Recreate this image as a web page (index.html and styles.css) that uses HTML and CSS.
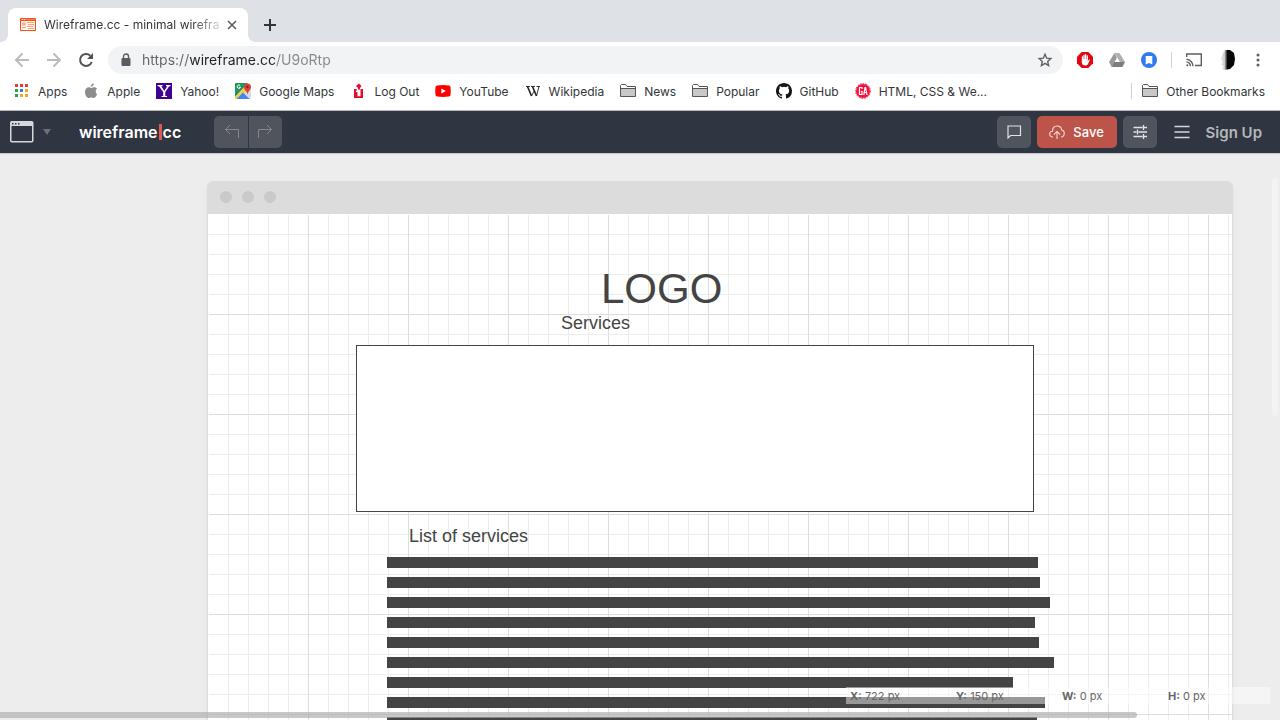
FILE: index.html
```html
<!DOCTYPE html>
<html lang="en">
<head>
<meta charset="utf-8">
<title>Wireframe.cc - minimal wireframing tool</title>
<link rel="stylesheet" href="styles.css">
</head>
<body>
<header class="browser">
  <div class="tabs">
    <div class="tab">
      <svg class="icon16" viewBox="0 0 16 16" fill="none" stroke="#fb4f14"><path d="M.5 1.500h15v12H.5z" fill="#fff4ee"/><path d="M1 3.500h14"/><path d="M1 2.500h1M3 2.500h1M5 2.500h10" opacity=".7"/><path d="M2.500 6h3v2h-3z" fill="#fbb08f" stroke="#fbb08f"/><path d="M7 5.500h7M8 7.500h6M2 10.500h4M7 9.500h6M8 11.500h6" stroke="#fba27e"/></svg>
      <span class="tab-title">Wireframe.cc - minimal wirefra</span>
      <button class="plain" aria-label="Close tab"><svg width="10" height="10" viewBox="0 0 10 10" stroke="#5a5d61" stroke-width="1.600"><path d="M1 1l8 8M9 1L1 9"/></svg></button>
    </div>
    <button class="plain new-tab" aria-label="New tab"><svg width="12" height="12" viewBox="0 0 12 12" stroke="#333639" stroke-width="2"><path d="M6 0v12M0 6h12"/></svg></button>
  </div>
  <div class="toolbar">
    <div class="nav">
      <button class="plain" aria-label="Back"><svg class="icon16" viewBox="0 0 16 16" fill="none" stroke="#babcbe" stroke-width="2"><path d="M15 8H2M8.500 1.500L2 8l6.500 6.500"/></svg></button>
      <button class="plain" aria-label="Forward"><svg class="icon16" viewBox="0 0 16 16" fill="none" stroke="#babcbe" stroke-width="2"><path d="M1 8h13M7.500 1.500L14 8l-6.500 6.500"/></svg></button>
      <button class="plain" aria-label="Reload"><svg class="icon16" viewBox="0 0 16 16" fill="none" stroke="#505357" stroke-width="2"><path d="M13.700 10A6 6 0 1 1 12.300 3.700"/><path d="M15 1v6H9z" fill="#505357" stroke="none"/></svg></button>
    </div>
    <div class="omnibox">
      <svg width="10" height="14" viewBox="0 0 10 14"><path d="M2.500 6V3.500a2.500 2.500 0 0 1 5 0V6" fill="none" stroke="#5a5d61" stroke-width="1.400"/><rect y="5" x="0.500" width="9" height="8" rx="1" fill="#5a5d61"/></svg>
      <input class="url" type="text" aria-label="Address" value="https://wireframe.cc/U9oRtp">
      <button class="plain" aria-label="Bookmark this page"><svg class="icon16" viewBox="0 0 16 16" fill="none" stroke="#5c5f63" stroke-width="1.400"><path d="M8 2.300l1.700 3.900 4.100.4-3.100 2.800.9 4.100L8 11.400l-3.600 2.100.9-4.100-3.100-2.800 4.100-.4z"/></svg></button>
    </div>
    <div class="extensions">
      <button class="plain" aria-label="Ad blocker"><svg class="icon16" viewBox="0 0 16 16"><path d="M4.700 0h6.600L16 4.700v6.600L11.300 16H4.700L0 11.300V4.700z" fill="#e10812"/><path d="M4.800 8V4.500q.7-.7 1.300 0V7h.3V3q.6-.8 1.300 0v4H8V2.500q.6-.8 1.300 0V7h.4V3.600q.6-.7 1.200 0V9l1-1.400q.8-.4 1 .3L11 12q-.8 1.500-2.500 1.500-3.700 0-3.700-3z" fill="#fff"/></svg></button>
      <button class="plain" aria-label="Drive"><svg class="icon16" viewBox="0 0 16 16"><path d="M5.500 1h5L16 10h-5z" fill="#b0b0b0"/><path d="M5.500 1L0 10l2.600 5L8 6z" fill="#999"/><path d="M2.600 15L5.200 10H16l-2.600 5z" fill="#7d7d7d"/><path d="M8 6l2.500 4h-5z" fill="#fff"/></svg></button>
      <button class="plain" aria-label="Reader"><svg class="icon16" viewBox="0 0 16 16"><circle cx="8" cy="8" r="8" fill="#2d7bf0"/><path d="M4.700 4h6.600v8.500L8 11l-3.300 1.500z" fill="#fff"/></svg></button>
      <i class="rule"></i>
      <button class="plain cast" aria-label="Cast"><svg class="icon16" viewBox="0 0 16 16" fill="none" stroke="#5c5f63" stroke-width="1.400"><path d="M.7 5V2h14.600v11.500H9"/><path d="M.5 7.200a7 7 0 0 1 6.500 7M.5 9.900a4 4 0 0 1 3.900 4.300"/><circle cx="1.300" cy="13.300" r="1" fill="#5c5f63" stroke="none"/></svg></button>
      <button class="plain profile" aria-label="Profile"><svg width="20" height="20" viewBox="0 0 20 20"><defs><linearGradient id="moon"><stop offset="0" stop-color="#fafafa"/><stop offset=".3" stop-color="#ccc"/><stop offset=".5" stop-color="#080808"/></linearGradient></defs><path d="M8 0h5l4 3 1 6-1 6-4 4-6 1-2-2 2-1-3-3 2-2-3-3 2-3 1-3z" fill="url(#moon)"/></svg></button>
      <button class="plain more" aria-label="Menu"><svg width="4" height="14" viewBox="0 0 4 14" fill="#5c5f63"><circle cx="2" cy="2" r="1.500"/><circle cx="2" cy="7" r="1.500"/><circle cx="2" cy="12" r="1.500"/></svg></button>
    </div>
  </div>
  <nav class="bookmarks">
    <a href="#"><svg class="icon16" viewBox="0 0 16 16"><path d="M1 1h3v3H1zM6 1h3v3H6zM11 1h3v3h-3z" fill="#e8393b"/><path d="M1 6h3v3H1zM1 11h3v3H1z" fill="#22a45d"/><path d="M6 6h3v3H6z" fill="#2d7fe8"/><path d="M11 6h3v3h-3zM6 11h3v3H6zM11 11h3v3h-3z" fill="#f0a51e"/></svg>Apps</a>
    <a href="#"><svg class="icon16" viewBox="0 0 16 16" fill="#8d8d8d"><path d="M10.800.3c.2 2-1.300 3.400-3 3.400C7.700 2 9.200.5 10.800.3zM12.700 8.300c0-1.500 1.200-2.300 1.300-2.500-1.500-2-3.600-1.500-4.300-1.200-1.200.5-1.500.4-2.600-.1C4.700 3.600 2 5.200 2 8.900 2 12 4 15 5.800 15c1 0 1.300-.6 2.500-.6s1.500.6 2.500.6c1.500 0 2.900-2.600 3.300-3.900-.9-.4-1.400-1.500-1.400-2.800z"/></svg>Apple</a>
    <a href="#"><svg class="icon16" viewBox="0 0 16 16"><path d="M0 0h16v16H0z" fill="#400090"/><path d="M1.500 2h5v1.200H5.400L8.300 8l3-4.800H10V2h4.500v1.200h-1.300L9.300 9v4H11v1H5.500v-1h1.700V9L3 3.200H1.500z" fill="#fff"/></svg>Yahoo!</a>
    <a href="#"><svg class="icon16" viewBox="0 0 16 16"><path d="M0 1q0-1 1-1h10l5 8v7l-1 1H1q-1 0-1-1z" fill="#d9dadb"/><path d="M0 1q0-1 1-1h12L0 14z" fill="#24945c"/><path d="M0 14L10.500 3.500 13 6 3 16H1q-1 0-1-1z" fill="#f5cf3f"/><path d="M1.500 16l6.500-6.500 6.500 6.500z" fill="#4285f4"/><path d="M12.300 11c0-3-3.300-3.500-3.300-7a3.500 3.500 0 0 1 7 0c0 3.500-3.200 4-3.200 7z" fill="#db4437"/><circle cx="12.500" cy="4" r="1.200" fill="#7b231e"/><path d="M5.300 2.700a1.700 1.700 0 1 0 .2 1.600H4" fill="none" stroke="#fff"/></svg>Google Maps</a>
    <a href="#"><svg class="icon16" viewBox="0 0 16 16" fill="#e80d2b"><path d="M9 .5l2.500 2.500L10 5H8L6 3zM4 6h2.500v2H6v1h1.500v4.500h3V6H13v9H4z"/><path d="M8 5h2v1.500H8zM4 13.500h9V15H4z"/></svg>Log Out</a>
    <a href="#"><svg class="icon16" viewBox="0 0 16 16"><path d="M2 2.500q6-.8 12 0 1.300.2 1.500 1.500.5 4 0 8-.2 1.300-1.500 1.500-6 .8-12 0Q.7 13.300.5 12q-.5-4 0-8Q.7 2.700 2 2.500z" fill="#f00"/><path d="M6.400 5.500L10.800 8l-4.400 2.500z" fill="#fff"/></svg>YouTube</a>
    <a href="#"><svg class="icon16" viewBox="0 0 16 16" fill="none" stroke="#222"><path d="M1 3.500h4M6 3.500h4M11.500 3.500H15" stroke-width=".9"/><path d="M2.500 3.500l4 9.500M7.500 3.500l4 9.500" stroke-width="1.600"/><path d="M6.500 13l2.600-5M11.500 13l2.500-9.500" stroke-width=".9"/></svg>Wikipedia</a>
    <a href="#"><svg class="icon16" viewBox="0 0 16 16"><path d="M.5 13.500V2.500L1.500 1.500h4l1.500 2h8.500v10z" fill="#fff" stroke="#555"/><path d="M1 6h14v7H1z" fill="#c8c8c8"/><path d="M1 5.500h14" stroke="#555"/></svg>News</a>
    <a href="#"><svg class="icon16" viewBox="0 0 16 16"><path d="M.5 13.500V2.500L1.500 1.500h4l1.500 2h8.500v10z" fill="#fff" stroke="#555"/><path d="M1 6h14v7H1z" fill="#c8c8c8"/><path d="M1 5.500h14" stroke="#555"/></svg>Popular</a>
    <a href="#"><svg class="icon16" viewBox="0 0 16 16" fill="#161616"><path d="M8 0C3.580 0 0 3.580 0 8c0 3.540 2.290 6.530 5.470 7.590.4.070.550-.170.550-.380 0-.190-.010-.820-.010-1.490-2.010.370-2.530-.490-2.690-.940-.090-.230-.480-.940-.820-1.130-.280-.150-.680-.520-.010-.530.630-.010 1.080.580 1.230.820.720 1.210 1.870.870 2.330.660.070-.520.280-.870.510-1.070-1.780-.200-3.640-.890-3.640-3.950 0-.870.310-1.590.820-2.150-.080-.200-.360-1.020.080-2.120 0 0 .670-.210 2.200.820a7.600 7.600 0 0 1 4 0c1.530-1.040 2.200-.820 2.200-.820.440 1.100.160 1.920.080 2.120.510.560.820 1.270.820 2.150 0 3.070-1.870 3.750-3.650 3.950.290.250.540.730.540 1.480 0 1.070-.010 1.930-.010 2.200 0 .210.150.460.550.380A8.010 8.010 0 0 0 16 8c0-4.420-3.580-8-8-8z"/></svg>GitHub</a>
    <a href="#"><svg class="icon16" viewBox="0 0 16 16"><circle cx="8" cy="8" r="7" fill="#f5113e"/><circle cx="8" cy="8" r="7.300" fill="none" stroke="#f5113e" stroke-dasharray="1.800 1"/><path d="M7 6V4.500H4.500v7H7V8.500H6M8.800 12l1.200-7.500h.6L12 12M9.200 9.500h2.200" fill="none" stroke="#fff" stroke-width="1.200"/></svg>HTML, CSS &amp; We...</a>
    <span class="other"><i class="rule"></i><a href="#"><svg class="icon16" viewBox="0 0 16 16"><path d="M.5 13.500V2.500L1.500 1.500h4l1.500 2h8.500v10z" fill="#fff" stroke="#555"/><path d="M1 6h14v7H1z" fill="#c8c8c8"/><path d="M1 5.500h14" stroke="#555"/></svg>Other Bookmarks</a></span>
  </nav>
</header>
<div class="appbar">
  <button class="plain window-type" aria-label="Window type"><svg width="24" height="22" viewBox="0 0 24 22"><rect x="0.750" y="0.750" width="22" height="20" rx="1" fill="none" stroke="#d6d7d9" stroke-width="1.500"/><path d="M1 1h22v4H1z" fill="#d6d7d9"/><path d="M2 2h1.500v1.500H2zM5 2h1.500v1.500H5zM8 2h1.500v1.500H8z" fill="#2f3541"/></svg><svg width="8" height="6" viewBox="0 0 8 6"><path d="M0 0h8L4 6z" fill="#6b7078"/></svg></button>
  <a class="brand" href="#">wireframe<i></i>cc</a>
  <div class="history">
    <button class="tool" aria-label="Undo"><svg class="icon16" viewBox="0 0 16 16" fill="none" stroke="#858789"><path d="M15.500 14V5.500H2.500M7 1L2.500 5.500 7 10"/></svg></button>
    <button class="tool" aria-label="Redo"><svg class="icon16" viewBox="0 0 16 16" fill="none" stroke="#858789"><path d="M.5 14V5.500h13M9 1l4.500 4.500L9 10"/></svg></button>
  </div>
  <div class="actions">
    <button class="tool" aria-label="Comments"><svg width="16" height="14" viewBox="0 0 16 14" fill="none" stroke="#e2e3e4" stroke-width="1.200"><path d="M2 1h12.500v9.500H4.500L2 13z"/></svg></button>
    <button class="tool save"><svg class="icon16" viewBox="0 0 16 16" fill="none" stroke="#f3d9d5" stroke-width="1.100"><path d="M4 13H3.200Q.7 12.500.7 10T3.500 7.300Q3.500 2 8 2q4.300 0 4.700 4 2.600.5 2.600 3.500 0 2.500-2.300 3.500H12M8 15V8M4.800 10.700L8 7.500l3.200 3.200"/></svg>Save</button>
    <button class="tool" aria-label="Settings"><svg width="16" height="16" viewBox="0 0 16 16" stroke="#e2e3e4" stroke-width="1.300"><path d="M1.500 3.500h9M12 3.500h3M1.500 8h3M6.500 8H15M1.500 12.500h9M12 12.500h3M11.500 1v5M5.500 5.500v5M11.500 10v5"/></svg></button>
    <button class="plain menu" aria-label="Menu"><svg width="16" height="14" viewBox="0 0 16 14" stroke="#d5d6d8" stroke-width="1.500"><path d="M0.500 1.500h15M0.500 7h15M0.500 12.500h15"/></svg></button>
    <a class="signup" href="#">Sign Up</a>
  </div>
</div>
<main class="workspace">
  <section class="frame">
    <div class="frame-bar"><i></i><i></i><i></i></div>
    <div class="canvas">
      <div class="node logo">LOGO</div>
      <div class="node services">Services</div>
      <div class="node box"></div>
      <div class="node list-title">List of services</div>
      <div class="node lines">
        <i style="width:651px"></i><i style="width:653px"></i><i style="width:663px"></i><i style="width:648px"></i><i style="width:652px"></i><i style="width:667px"></i><i style="width:626px"></i><i style="width:658px"></i><i style="width:650px"></i>
      </div>
    </div>
  </section>
  <div class="status"><span><b>X:</b> 722 px</span><span><b>Y:</b> 150 px</span><span><b>W:</b> 0 px</span><span><b>H:</b> 0 px</span></div>
  <div class="scroll-x"></div>
  <div class="scroll-y"></div>
</main>
</body>
</html>
```
FILE: styles.css
```css
* { box-sizing: border-box; }
body { margin: 0; height: 100vh; display: flex; flex-direction: column; overflow: hidden; background: #ededed; font-family: Inter, Roboto, sans-serif; font-size: 12px; color: #333639; }
a { color: inherit; text-decoration: none; }
svg { display: block; flex: none; }
button { font: inherit; border: 0; cursor: pointer; }
.plain { display: flex; align-items: center; justify-content: center; padding: 0; background: none; }
.icon16 { width: 16px; height: 16px; }
.rule { flex: none; width: 1px; height: 16px; background: #cfd1d3; }

.browser { flex: none; background: #fff; border-bottom: 1px solid #b4b6b9; }
.tabs { display: flex; align-items: flex-end; height: 42px; padding: 0 8px; background: #dee1e6; }
.tab { position: relative; display: flex; align-items: center; gap: 8px; width: 240px; height: 34px; padding: 0 11px 0 12px; border-radius: 8px 8px 0 0; background: #fff; }
.tab::before, .tab::after { content: ""; position: absolute; bottom: 0; width: 8px; height: 8px; }
.tab::before { right: 100%; background: radial-gradient(circle at 0 0, transparent 8px, #fff 8px); }
.tab::after { left: 100%; background: radial-gradient(circle at 100% 0, transparent 8px, #fff 8px); }
.tab-title { flex: 1; padding-bottom: 2px; white-space: nowrap; -webkit-mask-image: linear-gradient(to right, #000 85%, rgba(0,0,0,.2)); mask-image: linear-gradient(to right, #000 85%, rgba(0,0,0,.2)); }
.new-tab { height: 34px; margin-left: 16px; }

.toolbar { display: flex; align-items: center; height: 36px; padding: 4px 20px 4px 14px; }
.nav { display: flex; gap: 16px; }
.omnibox { flex: 1; display: flex; align-items: center; gap: 11px; height: 28px; margin: 0 14px; padding: 0 10px 0 13px; border-radius: 14px; background: #f1f3f4; }
.url { flex: 1; min-width: 0; padding: 0 0 2px; border: 0; outline: 0; font: 14px Inter, Roboto, sans-serif; color: transparent; background: linear-gradient(to right, #62656a 48px, #202124 48px 134px, #85888c 134px); -webkit-background-clip: text; background-clip: text; }
.extensions { display: flex; align-items: center; gap: 16px; }
.extensions .rule { margin: 0 -2px; }
.profile { margin: 0 -1px; }
.more { margin-left: 4px; }
.bookmarks { display: flex; align-items: center; gap: 16px; height: 32px; padding: 0 15px 6px 14px; color: #333639; white-space: nowrap; }
.bookmarks a { display: flex; align-items: center; gap: 8px; }
.other { display: flex; align-items: center; gap: 10px; margin-left: auto; }

.appbar { position: relative; flex: none; display: flex; align-items: center; height: 42px; padding: 0 18px 0 10px; background: #2f3541; box-shadow: 0 1px 1px rgba(0,0,0,.15); }
.window-type { gap: 9px; }
.brand { display: flex; align-items: center; width: 135px; padding-left: 28px; font-size: 16px; font-weight: 600; color: #fff; }
.brand i { width: 3px; height: 16px; margin: 0 1px; background: #e0594b; }
.history { display: flex; gap: 1px; margin-left: 28px; }
.tool { display: flex; align-items: center; justify-content: center; width: 34px; height: 32px; padding: 0; border-radius: 5px; background: #4f545d; }
.history .tool:first-child { border-radius: 5px 0 0 5px; }
.history .tool:last-child { width: 33px; border-radius: 0 5px 5px 0; }
.actions { display: flex; align-items: center; gap: 6px; margin-left: auto; }
.save { width: 80px; gap: 8px; background: #bc5449; color: #fff; font-size: 13px; font-weight: 500; }
.menu { margin: 0 10px 0 11px; }
.signup { font-size: 15px; font-weight: 600; color: #b5b7b9; }

.workspace { position: relative; flex: 1; min-height: 0; display: flex; overflow: hidden; padding: 28px 47px 0 207px; }
.frame { flex: 1; display: flex; flex-direction: column; border-radius: 6px 6px 0 0; box-shadow: 0 4px 6px rgba(0,0,0,.05); }
.frame-bar { flex: none; display: flex; align-items: center; gap: 10px; height: 33px; padding: 0 13px 1px; border-radius: 6px 6px 0 0; background: #dcdcdc; }
.frame-bar i { width: 12px; height: 12px; border-radius: 50%; background: #cacaca; }
.canvas { position: relative; flex: 1; border: solid #dcdcdc; border-width: 0 1px; background-color: #fff; background-image: linear-gradient(to right, #dedede 1px, transparent 1px), linear-gradient(#dedede 1px, transparent 1px), linear-gradient(to right, #ededed 1px, transparent 1px), linear-gradient(#ededed 1px, transparent 1px); background-size: 100px 100px, 100px 100px, 20px 20px, 20px 20px; color: #444; font-family: "Liberation Sans", Arial, sans-serif; font-size: 18px; line-height: 20px; }
.canvas::before { content: ""; position: absolute; top: 0; left: 0; right: 0; height: 1px; background: #fff; }
.canvas::after { content: ""; position: absolute; top: 0; left: 0; bottom: 0; width: 1px; background: #fff; }
.node { position: absolute; white-space: nowrap; }
.logo { left: 393px; top: 51px; font-size: 42px; line-height: 48px; }
.services { left: 353px; top: 99px; }
.box { left: 148px; top: 131px; width: 678px; height: 167px; border: 1px solid #444; background: #fff; }
.list-title { left: 201px; top: 312px; }
.lines { left: 179px; top: 343px; display: grid; gap: 9px; }
.lines i { height: 11px; background: #444; }

.status { position: absolute; right: 10px; bottom: 16px; display: grid; grid-template-columns: repeat(4, 106px); height: 17px; padding-left: 4px; width: 424px; background: rgba(255,255,255,.45); font-size: 11px; line-height: 18px; color: #666; }
.scroll-x { position: absolute; left: 0; right: 143px; bottom: 2px; height: 6px; border-radius: 0 3px 3px 0; background: rgba(170,170,170,.65); }
.scroll-y { position: absolute; right: 2px; top: 25px; width: 6px; height: 238px; border-radius: 3px; background: #f3f3f3; }
```
